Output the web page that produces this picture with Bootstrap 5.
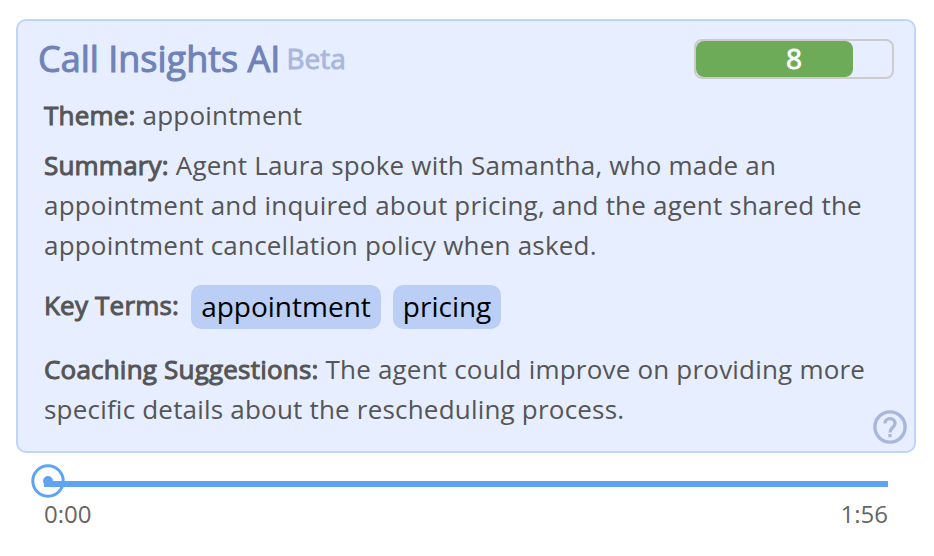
<!DOCTYPE html>
<html lang="en">
<head>
<meta charset="utf-8">
<meta name="viewport" content="width=device-width, initial-scale=1">
<title>Call Insights AI</title>
<link href="https://cdn.jsdelivr.net/npm/bootstrap@5.3.0/dist/css/bootstrap.min.css" rel="stylesheet">
<style>
  body { font-family: "Open Sans", sans-serif; font-size: 26px; line-height: 40px; color: #555; background: #fff; overflow: hidden; }
  .page { width: 934px; padding: 19px 18px 0 16px; }
  .insights { height: 434px; background: #e6eeff; border: 2px solid #c0d5fd; border-radius: 10px; padding: 18px 20px 0 20px; }
  .title { font-size: 36px; line-height: 40px; color: #7082b8; -webkit-text-stroke: 1px #7082b8; white-space: nowrap; }
  .beta { font-size: 28px; line-height: 38px; color: #a9b7dc; -webkit-text-stroke: .9px #a9b7dc; margin-left: 6px; }
  .score { width: 200px; height: 40px; border: 2px solid #ccc; border-radius: 8px; }
  .score-fill { height: 36px; background: #6dab59; border-radius: 8px; }
  .score-num { color: #fff; font-size: 28px; line-height: 35px; -webkit-text-stroke: .9px #fff; }
  .copy { padding-left: 6px; letter-spacing: .2px; }
  .line { white-space: nowrap; }
  .theme { margin-top: 16px; }
  .summary { margin-top: 10px; }
  .terms { margin-top: 20px; }
  .coaching { margin-top: 20px; }
  .label { -webkit-text-stroke: 1px #555; }
  .term { height: 44px; line-height: 42px; margin-left: 12px; padding: 0 10px; font-size: 28px; border-radius: 10px; background: #bbcff6; color: #000; letter-spacing: 0; }
  .help { right: 7px; bottom: 7px; }
  .player { padding: 8px 28px 0 15px; }
  .track { height: 6px; margin: 20px 0 0 13px; background: #5ea4f3; }
  .knob { left: -13px; top: -21px; }
  .times { font-size: 24px; line-height: 34px; color: #666; padding: 10px 0 0 13px; }
</style>
</head>
<body>
<main class="page">
  <section class="insights position-relative">
    <header class="d-flex justify-content-between">
      <div class="d-flex">
        <h1 class="title mb-0 fw-normal">Call Insights AI</h1>
        <span class="beta">Beta</span>
      </div>
      <div class="score position-relative">
        <div class="score-fill" style="width:80%"></div>
        <div class="score-num position-absolute top-0 start-0 w-100 text-center">8</div>
      </div>
    </header>
    <div class="copy">
      <div class="line theme"><span class="label">Theme:</span> appointment</div>
      <div class="line summary"><span class="label">Summary:</span> Agent Laura spoke with Samantha, who made an</div>
      <div class="line">appointment and inquired about pricing, and the agent shared the</div>
      <div class="line">appointment cancellation policy when asked.</div>
      <div class="terms d-flex">
        <span class="label">Key Terms:</span>
        <span class="term">appointment</span>
        <span class="term">pricing</span>
      </div>
      <div class="line coaching"><span class="label">Coaching Suggestions:</span> The agent could improve on providing more</div>
      <div class="line">specific details about the rescheduling process.</div>
    </div>
    <svg class="help position-absolute" width="34" height="34" viewBox="0 0 34 34" fill="none" stroke="#a9b7dc" stroke-width="3.4">
      <circle cx="17" cy="17" r="15.1"/>
      <path d="M12 13.6a5 5 0 0 1 10 0c0 3.8-5 4.2-5 8.8M17 23.9v3.4"/>
    </svg>
  </section>
  <section class="player">
    <div class="track position-relative">
      <svg class="knob position-absolute" width="34" height="38" viewBox="0 0 34 38">
        <circle cx="17" cy="21" r="15.2" fill="none" stroke="#5ea4f3" stroke-width="3"/>
        <circle cx="17" cy="21" r="5" fill="#5ea4f3"/>
      </svg>
    </div>
    <div class="times d-flex justify-content-between"><span>0:00</span><span>1:56</span></div>
  </section>
</main>
<script src="https://cdn.jsdelivr.net/npm/bootstrap@5.3.0/dist/js/bootstrap.bundle.min.js"></script>
</body>
</html>
